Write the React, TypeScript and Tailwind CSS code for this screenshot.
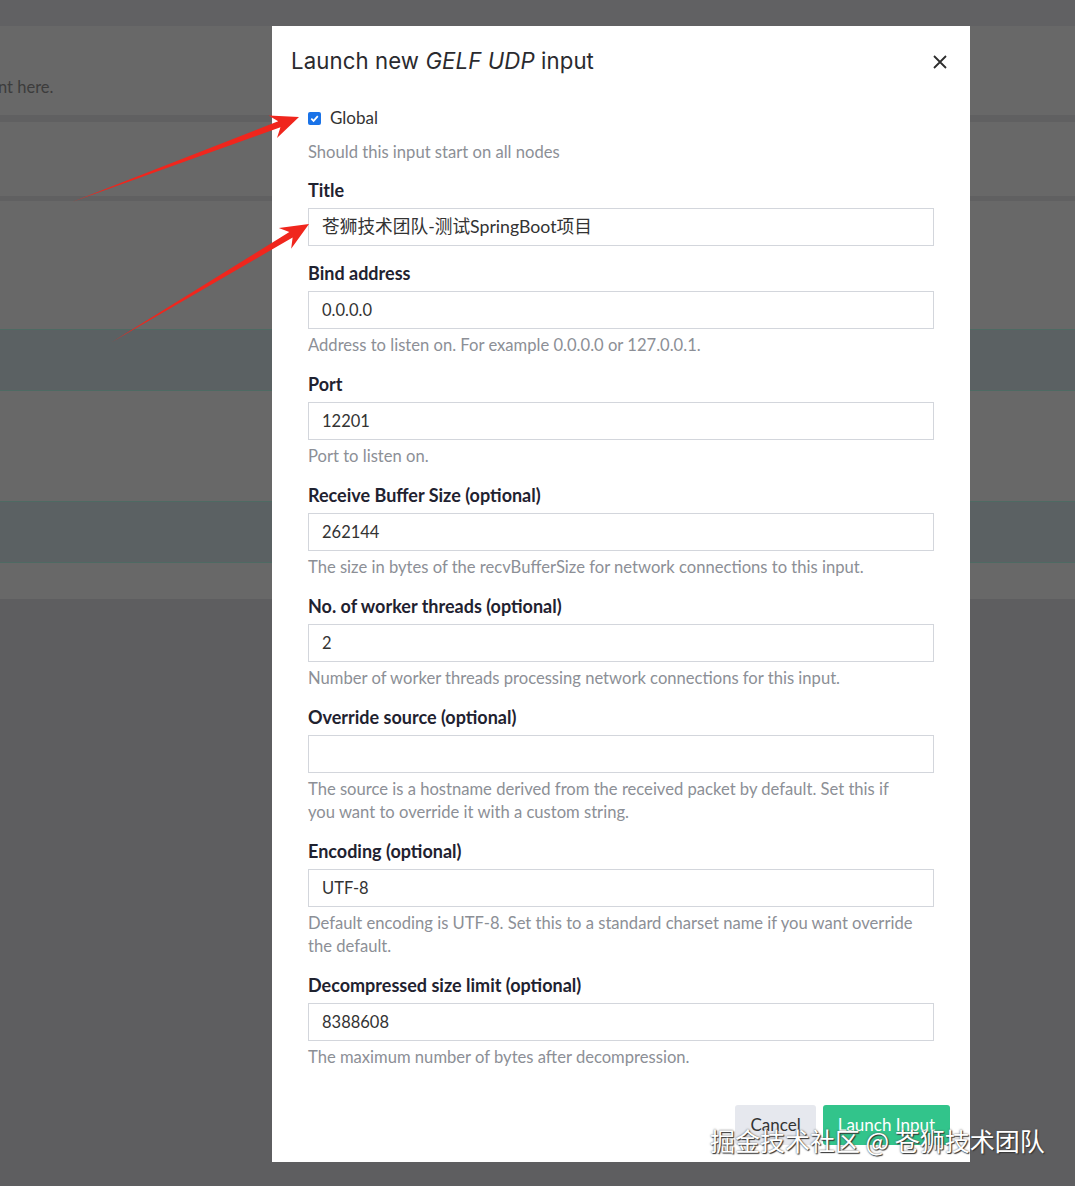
import React from "react";

type Field = {
  label: string;
  value: string;
  help?: string[];
  cjk?: boolean;
};

const fields: Field[] = [
  { label: "Title", value: "苍狮技术团队-测试SpringBoot项目", cjk: true },
  { label: "Bind address", value: "0.0.0.0", help: ["Address to listen on. For example 0.0.0.0 or 127.0.0.1."] },
  { label: "Port", value: "12201", help: ["Port to listen on."] },
  {
    label: "Receive Buffer Size (optional)",
    value: "262144",
    help: ["The size in bytes of the recvBufferSize for network connections to this input."],
  },
  {
    label: "No. of worker threads (optional)",
    value: "2",
    help: ["Number of worker threads processing network connections for this input."],
  },
  {
    label: "Override source (optional)",
    value: "",
    help: [
      "The source is a hostname derived from the received packet by default. Set this if",
      "you want to override it with a custom string.",
    ],
  },
  {
    label: "Encoding (optional)",
    value: "UTF-8",
    help: [
      "Default encoding is UTF-8. Set this to a standard charset name if you want override",
      "the default.",
    ],
  },
  {
    label: "Decompressed size limit (optional)",
    value: "8388608",
    help: ["The maximum number of bytes after decompression."],
  },
];

function Arrow({ x1, y1, x2, y2 }: { x1: number; y1: number; x2: number; y2: number }) {
  const dx = x2 - x1;
  const dy = y2 - y1;
  const len = Math.hypot(dx, dy);
  const ux = dx / len;
  const uy = dy / len;
  const nx = -uy;
  const ny = ux;
  const headLen = 28;
  const headHalf = 12;
  const shaftHalf = 3.2;
  const bx = x2 - ux * headLen;
  const by = y2 - uy * headLen;
  const ix = x2 - ux * (headLen - 7);
  const iy = y2 - uy * (headLen - 7);
  const pts = [
    [x1, y1],
    [ix + nx * shaftHalf, iy + ny * shaftHalf],
    [bx + nx * headHalf, by + ny * headHalf],
    [x2, y2],
    [bx - nx * headHalf, by - ny * headHalf],
    [ix - nx * shaftHalf, iy - ny * shaftHalf],
  ];
  return <polygon points={pts.map((p) => p.join(",")).join(" ")} fill="#f0261d" />;
}

function FieldRow({ f }: { f: Field }) {
  return (
    <div className="mb-[16px]">
      <div className="text-[18px] leading-[23px] font-bold text-[#1f2230] mb-[6px]">{f.label}</div>
      <div
        className={
          "h-[38px] border border-[#d3d6dc] bg-white flex items-center px-[13px] text-[#333] " +
          (f.cjk ? "text-[17.7px]" : "text-[16.5px]")
        }
      >
        {f.value}
      </div>
      {f.help && (
        <div className="mt-[5px] text-[16.6px] leading-[23px] text-[#8c8f96]">
          {f.help.map((h, i) => (
            <div key={i}>{h}</div>
          ))}
        </div>
      )}
    </div>
  );
}

export default function App() {
  return (
    <div
      className="relative w-[1075px] h-[1186px] overflow-hidden bg-[#5e5e60]"
      style={{ fontFamily: "Lato, 'Noto Sans CJK SC', sans-serif" }}
    >
      {/* background page behind backdrop */}
      <div className="flex flex-col">
        <div className="h-[26px] bg-[#616163]" />
        <div className="h-[89px] bg-[#686868] flex items-end pb-[15px]">
          <span className="text-[16.5px] text-[#3c3c3c] -ml-[2px]">nt here.</span>
        </div>
        <div className="h-[7px] bg-[#606061]" />
        <div className="h-[74px] bg-[#686868]" />
        <div className="h-[5px] bg-[#606061]" />
        <div className="h-[128px] bg-[#686868]" />
        <div className="h-[62px] bg-[#5b6163] border-y border-[#4e6a63]" />
        <div className="h-[110px] bg-[#686868]" />
        <div className="h-[62px] bg-[#5b6163] border-y border-[#4e6a63]" />
        <div className="h-[36px] bg-[#686868]" />
      </div>

      {/* modal */}
      <div className="absolute left-[272px] top-[26px] w-[698px] h-[1136px] bg-white">
        <div className="flex items-center justify-between pl-[19px] pr-[22px] pt-[10px] h-[60px]">
          <div
            className="text-[22.2px] text-[#2a2a2e] tracking-[0.1px]"
            style={{ fontFamily: "Inter, 'Noto Sans', sans-serif" }}
          >
            Launch new <i>GELF UDP</i> input
          </div>
          <svg width="16" height="16" viewBox="0 0 16 16" className="mt-[1px]">
            <path d="M2 2 L14 14 M14 2 L2 14" stroke="#2d2d2d" strokeWidth="1.8" />
          </svg>
        </div>
        <div className="px-[36px] pt-[21px]">
          <div className="flex items-center gap-[9px] h-[22px]">
            <span className="w-[13px] h-[13px] rounded-[2px] bg-[#1a73e8] flex items-center justify-center">
              <svg width="11" height="11" viewBox="0 0 12 12">
                <path d="M2.5 6.2 L5 8.6 L9.6 3.4" stroke="white" strokeWidth="1.9" fill="none" />
              </svg>
            </span>
            <span className="text-[17px] text-[#333]">Global</span>
          </div>
          <div className="mt-[12px] text-[16.6px] leading-[23px] text-[#8c8f96]">Should this input start on all nodes</div>
          <div className="mt-[15px]">
            {fields.map((f) => (
              <FieldRow key={f.label} f={f} />
            ))}
          </div>
          <div className="flex justify-end gap-[7px] mt-[36px] -mr-[16px]">
            <div className="h-[40px] px-[15px] bg-[#e6e8ee] rounded-[3px] flex items-center text-[17px] text-[#333]">
              Cancel
            </div>
            <div className="h-[40px] px-[15px] bg-[#32c48b] rounded-[3px] flex items-center text-[17px] text-white">
              Launch Input
            </div>
          </div>
        </div>
      </div>

      {/* annotation arrows */}
      <svg className="absolute left-0 top-0" width="1075" height="1186">
        <Arrow x1={72} y1={202} x2={299} y2={117} />
        <Arrow x1={112} y1={342} x2={309} y2={224} />
      </svg>

      {/* watermark */}
      <div
        className="absolute left-[710px] top-[1122px] text-[25px] text-white whitespace-nowrap [text-shadow:1px_1px_1px_#333,0_0_2px_#555]"
        style={{ fontFamily: "'Noto Sans CJK SC', sans-serif" }}
      >
        掘金技术社区 @ 苍狮技术团队
      </div>
    </div>
  );
}
